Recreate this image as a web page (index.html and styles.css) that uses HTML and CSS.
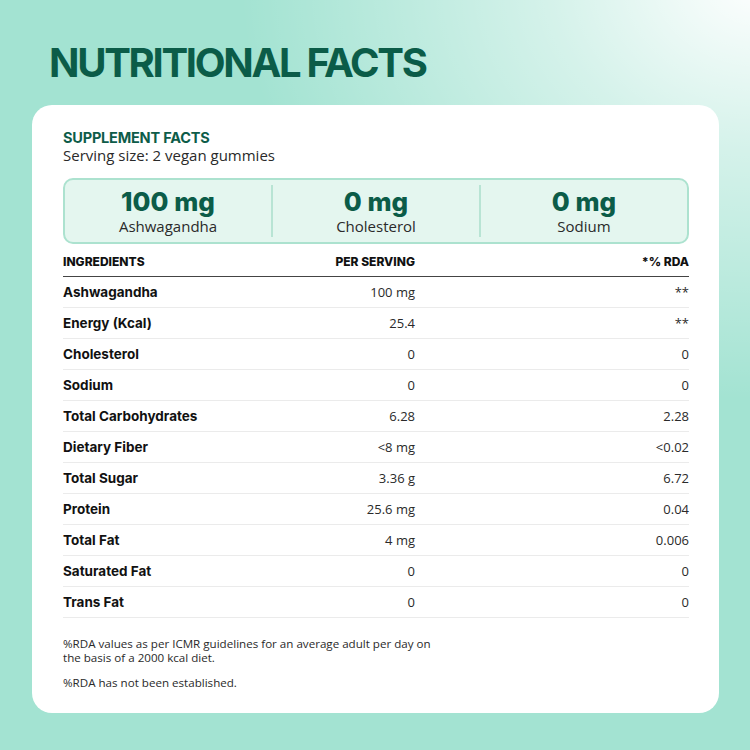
FILE: index.html
```html
<!DOCTYPE html>
<html>
<head>
<meta charset="utf-8">
<link rel="stylesheet" href="styles.css">
</head>
<body>
<div class="page">
  <h1 class="title">NUTRITIONAL FACTS</h1>
  <div class="card">
    <div class="supp">SUPPLEMENT FACTS</div>
    <div class="serving">Serving size: 2 vegan gummies</div>
    <div class="summary">
      <div class="sum-item"><div class="sum-val">100 mg</div><div class="sum-lab">Ashwagandha</div></div>
      <div class="sum-item"><div class="sum-val">0 mg</div><div class="sum-lab">Cholesterol</div></div>
      <div class="sum-item"><div class="sum-val">0 mg</div><div class="sum-lab">Sodium</div></div>
    </div>
    <div class="table">
      <div class="row head"><span class="c1">INGREDIENTS</span><span class="c2">PER SERVING</span><span class="c3">*% RDA</span></div>
      <div class="row"><span class="c1">Ashwagandha</span><span class="c2">100 mg</span><span class="c3">**</span></div>
      <div class="row"><span class="c1">Energy (Kcal)</span><span class="c2">25.4</span><span class="c3">**</span></div>
      <div class="row"><span class="c1">Cholesterol</span><span class="c2">0</span><span class="c3">0</span></div>
      <div class="row"><span class="c1">Sodium</span><span class="c2">0</span><span class="c3">0</span></div>
      <div class="row"><span class="c1">Total Carbohydrates</span><span class="c2">6.28</span><span class="c3">2.28</span></div>
      <div class="row"><span class="c1">Dietary Fiber</span><span class="c2">&lt;8 mg</span><span class="c3">&lt;0.02</span></div>
      <div class="row"><span class="c1">Total Sugar</span><span class="c2">3.36 g</span><span class="c3">6.72</span></div>
      <div class="row"><span class="c1">Protein</span><span class="c2">25.6 mg</span><span class="c3">0.04</span></div>
      <div class="row"><span class="c1">Total Fat</span><span class="c2">4 mg</span><span class="c3">0.006</span></div>
      <div class="row"><span class="c1">Saturated Fat</span><span class="c2">0</span><span class="c3">0</span></div>
      <div class="row"><span class="c1">Trans Fat</span><span class="c2">0</span><span class="c3">0</span></div>
    </div>
    <div class="notes">
      <span class="note-line">%RDA values as per ICMR guidelines for an average adult per day on</span>
      <span class="note-line">the basis of a 2000 kcal diet.</span>
      <span class="note-line note-gap">%RDA has not been established.</span>
    </div>
  </div>
</div>
</body>
</html>
```
FILE: styles.css
```css
* { box-sizing: border-box; }
html, body { margin: 0; padding: 0; }
body {
  width: 750px;
  height: 750px;
  overflow: hidden;
  font-family: "Open Sans", "DejaVu Sans", sans-serif;
  background: #a3e3d2;
}
.page {
  width: 750px;
  height: 750px;
  padding: 40px 31px 37px 32px;
  background:
    radial-gradient(ellipse 520px 420px at 760px -20px, #ffffff 0%, rgba(255,255,255,0.55) 40%, rgba(255,255,255,0) 100%),
    #a3e3d2;
}
.title {
  margin: 0 0 0 17px;
  height: 65px;
  font-family: "Inter", sans-serif;
  font-weight: 700;
  font-size: 40px;
  line-height: 46px;
  letter-spacing: -2.3px;
  color: #0b5c48;
}
.card {
  background: #fff;
  border-radius: 20px;
  height: 608px;
  padding: 24px 30px 0 31px;
}
.supp {
  font-family: "Inter", sans-serif;
  font-weight: 700;
  font-size: 14.5px;
  line-height: 17px;
  color: #0d5c49;
  letter-spacing: -0.2px;
}
.serving {
  font-size: 15px;
  line-height: 18px;
  color: #2a2a2a;
}
.summary {
  margin-top: 14px;
  height: 66px;
  border: 2px solid #ace2cf;
  border-radius: 10px;
  background: #e4f6ef;
  display: flex;
  align-items: center;
}
.sum-item {
  flex: 1;
  text-align: center;
  height: 52px;
  display: flex;
  flex-direction: column;
  justify-content: center;
}
.sum-item + .sum-item { border-left: 2px solid #b8e4d4; }
.sum-val {
  font-family: "Inter", sans-serif;
  font-weight: 800;
  font-size: 26px;
  line-height: 28px;
  color: #0b5c48;
}
.sum-lab {
  font-size: 15px;
  line-height: 18px;
  color: #2a2a2a;
  margin-top: 1px;
}
.table { margin-top: 2px; }
.row {
  display: grid;
  grid-template-columns: 1fr 150px 274px;
  align-items: center;
  height: 31px;
  border-bottom: 1px solid #ebebeb;
  font-size: 13px;
  color: #2a2a2a;
}
.row .c1 {
  font-family: "Inter", sans-serif;
  font-weight: 700;
  color: #111;
  font-size: 13.5px;
}
.row .c2, .row .c3 { text-align: right; }
.row.head {
  height: 31px;
  border-bottom: 1.5px solid #444;
  font-family: "Inter", sans-serif;
  font-weight: 800;
  font-size: 12px;
  color: #111;
}
.row.head span { font-weight: 800; font-size: 12px; }
.notes {
  margin-top: 19px;
  display: flex;
  flex-direction: column;
}
.note-line {
  display: block;
  font-size: 11.6px;
  line-height: 14px;
  color: #2a2a2a;
}
.note-gap { margin-top: 11px; }
```
